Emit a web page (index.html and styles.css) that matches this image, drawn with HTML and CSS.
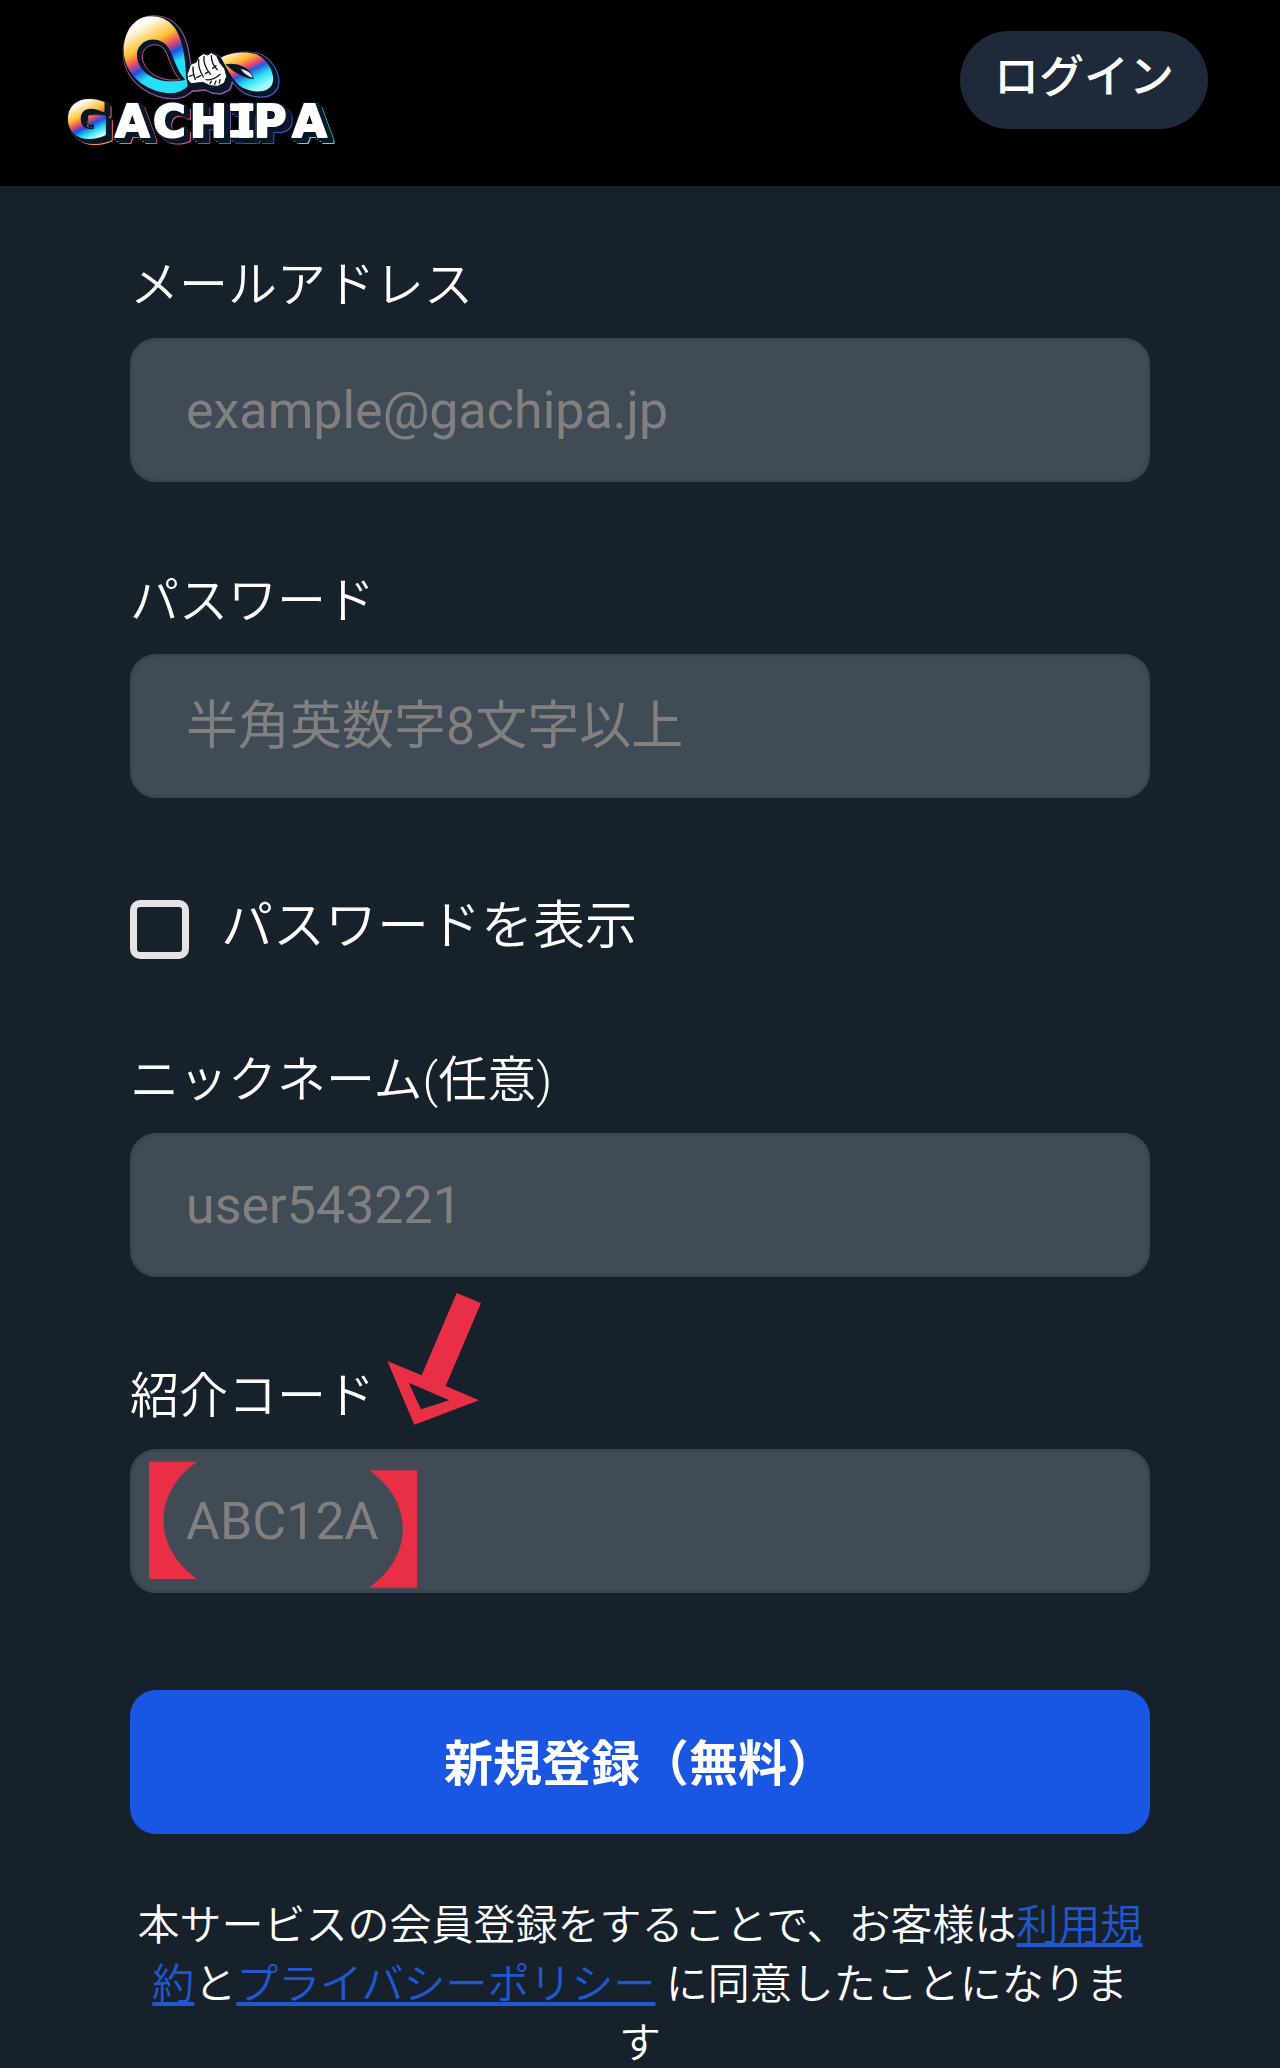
FILE: index.html
```html
<!DOCTYPE html>
<html lang="ja">

<head>
    <meta charset="UTF-8">
    <meta name="viewport" content="width=device-width, initial-scale=1.0">
    <title>GACHIPA 新規登録</title>
    <link rel="stylesheet" href="styles.css">
</head>

<body>
    <header class="header">
        <a class="logo" href="#" aria-label="GACHIPA">
            <svg viewBox="50 35 822 411">
                <defs>
                    <linearGradient id="loop-l" gradientUnits="userSpaceOnUse" x1="280" y1="50" x2="379" y2="224">
                        <stop offset="0.1" stop-color="#fffdf2" />
                        <stop offset="0.4" stop-color="#fdc02f" />
                        <stop offset="0.56" stop-color="#e8456a" />
                        <stop offset="0.68" stop-color="#1d4fe0" />
                        <stop offset="0.84" stop-color="#25e0f5" />
                    </linearGradient>
                    <linearGradient id="loop-r" gradientUnits="userSpaceOnUse" x1="570" y1="145" x2="630" y2="262">
                        <stop offset="0" stop-color="#fff3b8" />
                        <stop offset="0.25" stop-color="#fdb92f" />
                        <stop offset="0.45" stop-color="#e8456a" />
                        <stop offset="0.56" stop-color="#2858e0" />
                        <stop offset="0.76" stop-color="#25e0f5" />
                        <stop offset="1" stop-color="#9ff7ff" />
                    </linearGradient>
                    <linearGradient id="letter-g" gradientUnits="userSpaceOnUse" x1="95" y1="305" x2="150" y2="415">
                        <stop offset="0" stop-color="#ffffff" />
                        <stop offset="0.32" stop-color="#fdc02f" />
                        <stop offset="0.48" stop-color="#e8456a" />
                        <stop offset="0.6" stop-color="#1d4fe0" />
                        <stop offset="0.78" stop-color="#25e0f5" />
                        <stop offset="1" stop-color="#ffffff" />
                    </linearGradient>
                    <linearGradient id="edge" gradientUnits="userSpaceOnUse" x1="215" y1="0" x2="695" y2="0">
                        <stop offset="0" stop-color="#a04a86" />
                        <stop offset="0.6" stop-color="#8a4fa8" />
                        <stop offset="1" stop-color="#2459d0" />
                    </linearGradient>
                    <!-- dark extrusion with a rainbow rim -->
                    <filter id="extrude" filterUnits="userSpaceOnUse" x="30" y="270" width="860" height="190" color-interpolation-filters="sRGB">
                        <feFlood x="30" width="150" flood-color="#f5a13c" result="c1" />
                        <feFlood x="180" width="120" flood-color="#ee6a5a" result="c2" />
                        <feFlood x="300" width="140" flood-color="#d8508c" result="c3" />
                        <feFlood x="440" width="120" flood-color="#7a52b8" result="c4" />
                        <feFlood x="560" width="190" flood-color="#2459d0" result="c5" />
                        <feFlood x="750" width="140" flood-color="#45e0e6" result="c6" />
                        <feMerge result="bands">
                            <feMergeNode in="c1" />
                            <feMergeNode in="c2" />
                            <feMergeNode in="c3" />
                            <feMergeNode in="c4" />
                            <feMergeNode in="c5" />
                            <feMergeNode in="c6" />
                        </feMerge>
                        <feMorphology in="SourceAlpha" operator="dilate" radius="4" result="near" />
                        <feOffset in="near" dx="6" dy="5" result="mid" />
                        <feOffset in="near" dx="14" dy="13" result="far" />
                        <feMerge result="body">
                            <feMergeNode in="near" />
                            <feMergeNode in="mid" />
                            <feMergeNode in="far" />
                        </feMerge>
                        <!-- the rim shows only below and to the right -->
                        <feOffset in="body" dx="4" dy="4" result="rim" />
                        <feComposite in="bands" in2="rim" operator="in" result="rainbow" />
                        <feFlood flood-color="#071726" />
                        <feComposite in2="body" operator="in" result="dark" />
                        <feMerge>
                            <feMergeNode in="rainbow" />
                            <feMergeNode in="dark" />
                            <feMergeNode in="SourceGraphic" />
                        </feMerge>
                    </filter>
                    <path id="loops" d="M412 238C406 180 408 50 307 48C240 48 215 120 226 175C240 240 310 282 375 278C392 276 405 268 415 258ZM515 172C540 158 590 150 625 163C665 185 682 235 665 258C648 280 610 276 580 262C552 246 540 215 515 172Z" />
                    <path id="fist" d="M413 222L424 192L440 186L448 170L462 160L475 164L486 157L502 166L512 188L526 205L532 228L525 248L505 258L482 256L460 246L425 250L415 238Z" />
                </defs>

                <!-- loops and fist -->
                <g stroke="url(#edge)" stroke-width="22" stroke-linejoin="round">
                    <use href="#loops" x="8" y="8" />
                    <use href="#fist" x="10" y="14" />
                </g>
                <g stroke="#071726" stroke-width="16" stroke-linejoin="round" fill="#071726">
                    <use href="#loops" x="7" y="7" />
                    <use href="#fist" x="8" y="12" />
                </g>
                <path fill="url(#loop-l)" d="M412 238C406 180 408 50 307 48C240 48 215 120 226 175C240 240 310 282 375 278C392 276 405 268 415 258Z" />
                <path fill="#071726" d="M408 238C375 246 330 246 302 226C262 202 252 155 275 133C298 108 340 115 357 142C375 172 380 208 408 238Z" />
                <path fill="#000" stroke="#c3508f" stroke-width="3" d="M392 238C362 242 330 236 308 220C280 196 270 165 288 145C304 128 334 130 346 148C362 176 366 212 392 238Z" />
                <path fill="url(#loop-r)" d="M515 172C540 158 590 150 625 163C665 185 682 235 665 258C648 280 610 276 580 262C552 246 540 215 515 172Z" />
                <path fill="#071726" d="M528 192C556 186 602 196 614 236C590 236 556 220 528 192Z" />
                <path fill="#dfe8f5" d="M574 206C594 210 608 220 610 233C596 228 584 220 574 206Z" />
                <use href="#fist" fill="#fff" stroke="#071726" stroke-width="3" />
                <g fill="none" stroke="#101820" stroke-width="4" stroke-linecap="round">
                    <path d="M431 200C430 214 434 228 438 238M448 178C446 196 452 214 462 230M464 168C462 184 470 206 484 222M486 166C486 182 494 198 504 208" />
                    <path d="M420 228L430 224M442 232L454 226M468 220L478 214M490 204L500 196" />
                    <path d="M470 238C484 240 500 234 512 222M482 250L486 242M496 252L500 242M510 248L512 238" />
                </g>

                <!-- wordmark -->
                <g class="wordmark" filter="url(#extrude)" fill="#fff" stroke="#fff" stroke-width="6" stroke-linejoin="round">
                    <text x="53 197 311 421 559 613 729" y="409"><tspan class="big" fill="url(#letter-g)" stroke="url(#letter-g)">G</tspan>ACHIPA</text>
                    <path d="M545 312H609V329H545ZM545 392H609V409H545Z" />
                </g>
            </svg>
        </a>
        <button class="login-btn" type="button">ログイン</button>
    </header>

    <main class="main">
        <form class="form">
            <div class="group">
                <label for="email">メールアドレス</label>
                <input class="field" id="email" type="email" placeholder="example@gachipa.jp">
            </div>
            <div class="group">
                <label for="password">パスワード</label>
                <input class="field" id="password" type="password" placeholder="半角英数字8文字以上">
            </div>
            <div class="check">
                <input id="show" type="checkbox">
                <label for="show">パスワードを表示</label>
            </div>
            <div class="group">
                <label for="nickname">ニックネーム(任意)</label>
                <input class="field" id="nickname" type="text" placeholder="user543221">
            </div>
            <div class="group">
                <label for="code">紹介コード</label>
                <input class="field" id="code" type="text" placeholder="ABC12A">
                <!-- arrow and brackets over the code field -->
                <svg class="mark" viewBox="117 39 996 885" aria-hidden="true">
                    <path fill-rule="evenodd" d="M1040 39L1113 69L1007 318L1107 361L913 434L832 243L935 286ZM896 308L933 388L1018 361Z" />
                    <path d="M117 545H261C127 640 127 800 261 897H117Z" />
                    <path d="M921 571H777C912 665 912 828 777 923H921Z" />
                </svg>
            </div>
            <button class="submit-btn" type="submit">新規登録（無料）</button>
        </form>
        <p class="terms">本サービスの会員登録をすることで、お客様は<a href="#">利用規約</a>と<a href="#">プライバシーポリシー</a> に同意したことになります</p>
    </main>

    <script>
        var show = document.getElementById("show");
        var password = document.getElementById("password");

        //パスワードの表示切り替え
        show.onchange = function () {
            password.type = show.checked ? "text" : "password";
        }
    </script>
</body>

</html>
```
FILE: styles.css
```css
* {
    margin: 0;
    padding: 0;
    box-sizing: border-box;
}

body {
    background-color: #17212c;
    color: #fff;
    font-family: Roboto, "Noto Sans CJK JP", sans-serif;
}

button,
input {
    font-family: inherit;
    border: none;
}

.header {
    display: flex;
    justify-content: space-between;
    align-items: flex-start;
    height: 186px;
    padding: 12px 72px 0 66px;
    background-color: #000;
}

.logo svg {
    display: block;
    width: 274px;
    height: 137px;
}

.wordmark {
    font-family: "DejaVu Sans", sans-serif;
    font-size: 134px;
    font-weight: 700;
}

.wordmark .big {
    font-size: 150px;
    stroke-width: 9px;
}

.login-btn {
    height: 98px;
    margin-top: 19px;
    padding: 0 34px 14px;
    border-radius: 49px;
    background-color: #1e2939;
    color: #fff;
    font-size: 45px;
    font-weight: 500;
}

.main {
    padding: 68px 130px 0;
}

.form {
    display: flex;
    flex-direction: column;
    gap: 88px;
}

.group {
    position: relative;
}

.group label {
    display: block;
    margin-bottom: 20px;
    font-size: 49px;
    font-weight: 350;
    line-height: 64px;
}

.field {
    display: block;
    width: 100%;
    height: 144px;
    padding: 0 53px;
    border: 3px solid #394550;
    border-radius: 26px;
    background-color: #404b56;
    color: #fff;
    font-size: 52px;
}

.field::placeholder {
    color: #808080;
}

.check {
    display: flex;
    align-items: flex-end;
    gap: 32px;
    padding: 9px 0 2px;
}

.check input {
    appearance: none;
    width: 59px;
    height: 59px;
    border: 7px solid #e4e4e7;
    border-radius: 10px;
}

.check input:checked {
    background-color: #1a56e3;
}

.check label {
    font-size: 52px;
    font-weight: 350;
    line-height: 64px;
}

.mark {
    position: absolute;
    left: 19px;
    bottom: 5px;
    width: 332px;
    height: 295px;
    fill: #e82f45;
    pointer-events: none;
}

.submit-btn {
    height: 144px;
    margin-top: 9px;
    padding-bottom: 6px;
    border-radius: 26px;
    background-color: #1957e2;
    color: #fff;
    font-size: 49px;
    font-weight: 700;
}

.terms {
    margin-top: 62px;
    padding: 0 2px;
    font-size: 42px;
    font-weight: 350;
    line-height: 59px;
    text-align: center;
}

.terms a {
    color: #1f58cf;
    text-decoration: underline;
}
```
